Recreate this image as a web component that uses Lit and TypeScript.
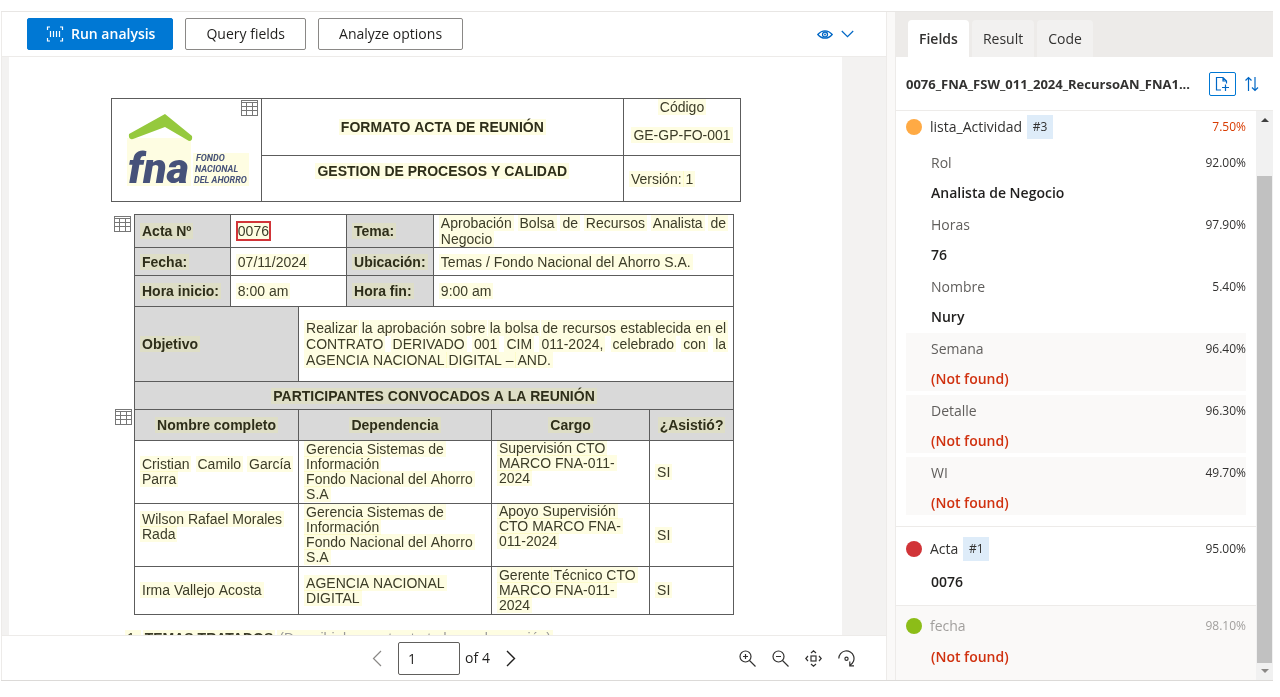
import { LitElement, html, css, svg } from "lit";
import { customElement, property, state } from "lit/decorators.js";
import { classMap } from "lit/directives/class-map.js";

const words = (text: string) =>
  text.split(" ").map((w, i) => html`${i ? " " : ""}<mark>${w}</mark>`);

const tableIcon = html`<svg width="17" height="16" viewBox="0 0 17 16" aria-hidden="true">
  <rect x="0.5" y="0.5" width="16" height="15" fill="#fff" stroke="#777" />
  <path d="M0 2.5H17M0 6.5H17M0 10.5H17M5.5 3V16M11.5 3V16" stroke="#777" fill="none" />
</svg>`;

@customElement("document-page")
class DocumentPage extends LitElement {
  static styles = css`
    :host {
      display: block;
      flex: 1;
      min-width: 0;
      background: #fff;
      padding: 41px 101px 0 102px;
      overflow: hidden;
      font: 14px/16px "Liberation Sans", Arial, sans-serif;
      color: #3c3c28;
    }
    .frame { position: relative; }
    .second { margin: 12px 7px 0 23px; }
    .marker { position: absolute; display: block; line-height: 0; }
    .on-logo { left: 130px; top: 2px; }
    .beside { left: -20px; top: 2px; }
    .beside-people { left: -19px; top: 195px; }
    table { width: 100%; border-collapse: collapse; table-layout: fixed; }
    th, td { border: 1px solid #5c5c5c; padding: 0 7px; text-align: left; font-weight: normal; }
    th { font-weight: bold; color: #2e2e1a; }
    mark { background: #fefde2; mix-blend-mode: multiply; color: inherit; padding: 0 2px; margin: 0 -2px; }
    .shade { background: #d9d9d9; }
    .shade mark { background: #dedec6; mix-blend-mode: normal; }
    .center { text-align: center; }
    .justify { text-align: justify; }
    .top { vertical-align: top; }
    .raised { padding-bottom: 16px; }
    .code { margin: 0 0 12px; }
    .people { line-height: 15px; }
    .boxed { outline: 2px solid #d13438; padding: 0; margin: 0; }
    .r28 { height: 28px; }
    .r31 { height: 31px; }
    .r33 { height: 33px; }
    .r46 { height: 46px; }
    .r48 { height: 48px; }
    .r57 { height: 57px; }
    .r63 { height: 63px; }
    .r75 { height: 75px; }
    .logo-cell { padding: 0; }
    .logo { display: block; margin: 0 auto 0 15px; }
    .logo-big { font: italic 900 43px Roboto, "Liberation Sans", sans-serif; fill: #46527a; }
    .logo-small { font: italic bold 9px Roboto, "Liberation Sans", sans-serif; fill: #46527a; }
    .topics { margin: 15px 0 0 16px; display: flex; gap: 6px; white-space: nowrap; }
    .topics-title { font-weight: bold; }
    .topics-note { color: #999; }
  `;

  render() {
    return html`
      <div class="frame">
        <table>
          <colgroup><col style="width:23.8%" /><col style="width:57.6%" /><col style="width:18.6%" /></colgroup>
          <tr class="r57">
            <td rowspan="2" class="logo-cell">
              <svg class="logo" width="124" height="76" viewBox="0 0 124 76" role="img" aria-label="FNA Fondo Nacional del Ahorro">
                <rect x="0" y="26" width="64" height="48" fill="#fefde2" />
                <rect x="66" y="41" width="56" height="33" fill="#fefde2" />
                <path d="M38 2 L65 24 Q66 29 62 29 L38 15 L6 27 Q1 28 2 22 Z" fill="#95c93d" />
                <text class="logo-big" x="1" y="71">fna</text>
                <text class="logo-small" x="69" y="49">FONDO</text>
                <text class="logo-small" x="68" y="60">NACIONAL</text>
                <text class="logo-small" x="67" y="71">DEL AHORRO</text>
              </svg>
            </td>
            <th class="center">${words("FORMATO ACTA DE REUNIÓN")}</th>
            <td class="center top"><p class="code">${words("Código")}</p>${words("GE-GP-FO-001")}</td>
          </tr>
          <tr class="r46">
            <th class="center raised">${words("GESTION DE PROCESOS Y CALIDAD")}</th>
            <td>${words("Versión: 1")}</td>
          </tr>
        </table>
        <span class="marker on-logo">${tableIcon}</span>
      </div>

      <div class="frame second">
        <table>
          <colgroup>
            <col style="width:16%" /><col style="width:11.4%" /><col style="width:8%" /><col style="width:14.5%" />
            <col style="width:9.7%" /><col style="width:26.4%" /><col style="width:14%" />
          </colgroup>
          <tr class="r33">
            <th class="shade">${words("Acta Nº")}</th>
            <td colspan="2"><mark class="boxed">0076</mark></td>
            <th class="shade">${words("Tema:")}</th>
            <td colspan="3" class="justify">${words("Aprobación Bolsa de Recursos Analista de Negocio")}</td>
          </tr>
          <tr class="r28">
            <th class="shade">${words("Fecha:")}</th>
            <td colspan="2">${words("07/11/2024")}</td>
            <th class="shade">${words("Ubicación:")}</th>
            <td colspan="3">${words("Temas / Fondo Nacional del Ahorro S.A.")}</td>
          </tr>
          <tr class="r31">
            <th class="shade">${words("Hora inicio:")}</th>
            <td colspan="2">${words("8:00 am")}</td>
            <th class="shade">${words("Hora fin:")}</th>
            <td colspan="3">${words("9:00 am")}</td>
          </tr>
          <tr class="r75">
            <th colspan="2" class="shade">${words("Objetivo")}</th>
            <td colspan="5" class="justify">
              ${words("Realizar la aprobación sobre la bolsa de recursos establecida en el CONTRATO DERIVADO 001 CIM 011-2024, celebrado con la AGENCIA NACIONAL DIGITAL – AND.")}
            </td>
          </tr>
          <tr class="r28">
            <th colspan="7" class="shade center">${words("PARTICIPANTES CONVOCADOS A LA REUNIÓN")}</th>
          </tr>
          <tr class="r31">
            <th colspan="2" class="shade center">${words("Nombre completo")}</th>
            <th colspan="3" class="shade center">${words("Dependencia")}</th>
            <th class="shade center">${words("Cargo")}</th>
            <th class="shade center">${words("¿Asistió?")}</th>
          </tr>
          <tr class="r63 people">
            <td colspan="2" class="justify">${words("Cristian Camilo García Parra")}</td>
            <td colspan="3">${words("Gerencia Sistemas de")}<br />${words("Información")}<br />${words("Fondo Nacional del Ahorro")}<br />${words("S.A")}</td>
            <td class="top">${words("Supervisión CTO")}<br />${words("MARCO FNA-011-")}<br />${words("2024")}</td>
            <td>${words("SI")}</td>
          </tr>
          <tr class="r63 people">
            <td colspan="2" class="raised">${words("Wilson Rafael Morales")}<br />${words("Rada")}</td>
            <td colspan="3">${words("Gerencia Sistemas de")}<br />${words("Información")}<br />${words("Fondo Nacional del Ahorro")}<br />${words("S.A")}</td>
            <td class="top">${words("Apoyo Supervisión")}<br />${words("CTO MARCO FNA-")}<br />${words("011-2024")}</td>
            <td>${words("SI")}</td>
          </tr>
          <tr class="r48 people">
            <td colspan="2">${words("Irma Vallejo Acosta")}</td>
            <td colspan="3">${words("AGENCIA NACIONAL")}<br />${words("DIGITAL")}</td>
            <td>${words("Gerente Técnico CTO")}<br />${words("MARCO FNA-011-")}<br />${words("2024")}</td>
            <td>${words("SI")}</td>
          </tr>
        </table>
        <span class="marker beside">${tableIcon}</span>
        <span class="marker beside-people">${tableIcon}</span>
      </div>
      <div class="topics">
        <span>${words("1.")}</span>
        <span class="topics-title">${words("TEMAS TRATADOS")}</span>
        <span class="topics-note">${words("(Describir los puntos tratados en la reunión)")}</span>
      </div>
    `;
  }
}

interface Entry { label: string; score: string; value?: string; }
interface Field extends Entry { color: string; tag?: string; low?: boolean; muted?: boolean; children?: Entry[]; }

const FIELDS: Field[] = [
  {
    label: "lista_Actividad", score: "7.50%", color: "#ffaa44", tag: "#3", low: true,
    children: [
      { label: "Rol", score: "92.00%", value: "Analista de Negocio" },
      { label: "Horas", score: "97.90%", value: "76" },
      { label: "Nombre", score: "5.40%", value: "Nury" },
      { label: "Semana", score: "96.40%" },
      { label: "Detalle", score: "96.30%" },
      { label: "WI", score: "49.70%" },
    ],
  },
  { label: "Acta", score: "95.00%", color: "#d13438", tag: "#1", value: "0076" },
  { label: "fecha", score: "98.10%", color: "#8cbd18", muted: true },
];

@customElement("field-item")
class FieldItem extends LitElement {
  @property({ attribute: false }) field!: Field;

  static styles = css`
    :host { display: block; }
    .item { padding: 10px 10px 13px; border-bottom: 1px solid #edebe9; }
    .parent { padding: 4px 10px 11px; }
    .missing { background: #faf9f8; border-bottom: 0; }
    .head { display: flex; align-items: center; gap: 8px; line-height: 20px; color: #323130; }
    .dot { width: 16px; height: 16px; border-radius: 50%; flex: none; background: var(--dot); }
    .name { margin-right: -3px; }
    .muted { color: #a19f9d; }
    .tag { background: #deecf9; width: 26px; height: 24px; line-height: 24px; text-align: center; font-size: 12px; }
    .score { margin-left: auto; font-size: 12px; }
    .low { color: #d83b01; }
    .value { margin: 11px 0 0 25px; line-height: 20px; font-weight: 600; color: #201f1e; }
    .value.none { color: #d0310f; }
    .children { display: grid; gap: 4px; margin-top: 8px; }
    .child { padding: 6px 0 2px 25px; }
    .child .head { color: #605e5c; }
    .child .score { color: #323130; }
    .child .value { margin: 10px 0 0; }
  `;

  private value(v?: string) {
    return html`<div class=${classMap({ value: true, none: !v })}>${v ?? "(Not found)"}</div>`;
  }

  render() {
    const f = this.field;
    return html`
      <div class=${classMap({ item: true, parent: !!f.children, missing: !f.children && !f.value })}>
        <div class=${classMap({ head: true, muted: !!f.muted })}>
          <span class="dot" style="--dot:${f.color}"></span>
          <span class="name">${f.label}</span>
          ${f.tag ? html`<span class="tag">${f.tag}</span>` : ""}
          <span class=${classMap({ score: true, low: !!f.low })}>${f.score}</span>
        </div>
        ${f.children
          ? html`<div class="children">
              ${f.children.map(c => html`
                <div class=${classMap({ child: true, missing: !c.value })}>
                  <div class="head"><span>${c.label}</span><span class="score">${c.score}</span></div>
                  ${this.value(c.value)}
                </div>`)}
            </div>`
          : this.value(f.value)}
      </div>
    `;
  }
}

const magnifier = (plus: boolean) => svg`
  <circle cx="6.5" cy="6.5" r="5.5" /><path d="M10.5 10.5 L16.5 16.5M4 6.5H9" />${plus ? svg`<path d="M6.5 4V9" />` : ""}`;

@customElement("app-root")
class AppRoot extends LitElement {
  @state() private tab = "Fields";

  static styles = css`
    :host {
      display: block;
      box-sizing: border-box;
      height: 100vh;
      padding: 11px 7px 16px 1px;
      background: #fff;
      font: 14px/20px "Open Sans", "Noto Sans", sans-serif;
      color: #201f1e;
    }
    * { box-sizing: border-box; }
    button { font: inherit; color: inherit; cursor: pointer; margin: 0; }
    svg { display: block; fill: none; stroke: currentColor; }
    .shell { display: flex; height: 100%; border-top: 1px solid #e8e6e4; border-bottom: 1px solid #dcdad8; }
    .viewer { flex: 1; min-width: 0; display: flex; flex-direction: column; border-left: 1px solid #edebe9; }
    .toolbar { display: flex; align-items: center; gap: 12px; height: 45px; padding: 0 32px 0 25px; border-bottom: 1px solid #edebe9; }
    .action { height: 32px; border: 1px solid #8a8886; border-radius: 2px; background: #fff; padding: 0 20px; white-space: nowrap; }
    .primary { background: #0078d4; border-color: #0078d4; color: #fff; font-weight: 600; display: flex; align-items: center; gap: 7px; padding: 0 17px 0 18px; }
    .view { margin-left: auto; display: flex; align-items: center; gap: 8px; border: 0; background: none; padding: 0; color: #0067c5; }
    .canvas { flex: 1; min-height: 0; display: flex; padding: 0 44px 0 7px; background: #f3f2f1; }
    .footer { display: grid; grid-template-columns: 1fr auto 1fr; align-items: center; height: 45px; border-top: 1px solid #edebe9; padding: 0 31px; }
    .pager { grid-column: 2; display: flex; align-items: center; }
    .icon { border: 0; background: none; padding: 0; }
    .prev { color: #8a8886; margin-right: 16px; }
    .next { margin-left: 16px; }
    .page-no { width: 62px; height: 33px; border: 1px solid #605e5c; border-radius: 2px; padding: 0 9px; font: inherit; color: inherit; margin: 0 5px 0 0; }
    .tools { display: flex; justify-content: flex-end; gap: 16px; color: #323130; }
    .splitter { width: 10px; background: #faf9f8; border: solid #edebe9; border-width: 0 1px; }
    .side { flex: 0 0 377px; min-width: 0; display: flex; flex-direction: column; }
    .tabs { display: flex; align-items: flex-end; gap: 3px; height: 45px; padding-left: 12px; background: #edebe9; }
    .tab { height: 37px; border: 0; border-radius: 4px 4px 0 0; background: #f2f1f0; color: #323130; padding: 0 11px; }
    .tab[aria-selected="true"] { background: #fff; font-weight: 600; }
    .title-row { display: flex; align-items: center; height: 54px; padding: 0 13px 0 10px; border-bottom: 1px solid #edebe9; }
    .title { flex: 1; min-width: 0; margin: 0; font-size: 13px; font-weight: 700; color: #323130; white-space: nowrap; }
    .add { width: 27px; height: 24px; border: 1px solid #0078d4; border-radius: 2px; background: #fff; color: #0067c5; display: grid; place-items: center; padding: 0; margin-right: 8px; }
    .sort { color: #0067c5; }
    .scroller { flex: 1; min-height: 0; display: flex; }
    .list { flex: 1; min-width: 0; overflow: hidden; display: flex; flex-direction: column; }
    .last { flex: 1; background: #faf9f8; }
    .bar { width: 17px; background: #f1f1f1; display: flex; flex-direction: column; align-items: center; padding: 7px 0; }
    .thumb { flex: 1; width: 15px; background: #c1c1c1; margin: 54px 0 6px; }
    .arrow { border: 4px solid transparent; border-top-width: 0; border-bottom-color: #404040; }
    .arrow.down { border-top: 4px solid #8a8886; border-bottom-width: 0; }
  `;

  render() {
    return html`
      <div class="shell">
        <main class="viewer">
          <div class="toolbar">
            <button class="action primary">
              <svg width="18" height="16" viewBox="0 0 18 16" stroke-width="1.2">
                <path d="M4 1H1.5V4M14 1H16.5V4M4 15H1.5V12M14 15H16.5V12M4.5 5V11M7.5 5V11M10.5 5V11M13.5 5V11" />
              </svg>
              Run analysis
            </button>
            <button class="action">Query fields</button>
            <button class="action">Analyze options</button>
            <button class="view" aria-label="View options">
              <svg width="16" height="9" viewBox="0 0 16 9" stroke-width="1.3">
                <path d="M0.8 4.5Q4 0.8 8 0.8T15.2 4.5Q12 8.2 8 8.2T0.8 4.5Z" /><circle cx="8" cy="4.5" r="2.5" /><circle cx="8" cy="4.5" r="0.4" />
              </svg>
              <svg width="13" height="8" viewBox="0 0 13 8" stroke-width="1.2"><path d="M0.8 1L6.5 6.7L12.2 1" /></svg>
            </button>
          </div>
          <div class="canvas"><document-page></document-page></div>
          <div class="footer">
            <div class="pager">
              <button class="icon prev" aria-label="Previous page"><svg width="10" height="17" viewBox="0 0 10 17" stroke-width="1.2"><path d="M9 1L1.5 8.5L9 16" /></svg></button>
              <input class="page-no" aria-label="Page number" .value=${"1"} />
              <span>of 4</span>
              <button class="icon next" aria-label="Next page"><svg width="10" height="17" viewBox="0 0 10 17" stroke-width="1.4"><path d="M1 1L8.5 8.5L1 16" /></svg></button>
            </div>
            <div class="tools">
              <button class="icon" aria-label="Zoom in"><svg width="17" height="17" viewBox="0 0 17 17" stroke-width="1.2">${magnifier(true)}</svg></button>
              <button class="icon" aria-label="Zoom out"><svg width="17" height="17" viewBox="0 0 17 17" stroke-width="1.2">${magnifier(false)}</svg></button>
              <button class="icon" aria-label="Fit to page">
                <svg width="17" height="17" viewBox="0 0 17 17" stroke-width="1.2">
                  <rect x="6" y="6" width="5" height="5" />
                  <path d="M6 3L8.5 0.8L11 3M6 14L8.5 16.2L11 14M3 6L0.8 8.5L3 11M14 6L16.2 8.5L14 11" />
                </svg>
              </button>
              <button class="icon" aria-label="Rotate">
                <svg width="17" height="17" viewBox="0 0 17 17" stroke-width="1.2">
                  <path d="M0.8 8.5A7.6 7.6 0 1 1 12 15.2M11.8 11.5V15.8H16" /><circle cx="8.5" cy="8.8" r="1.6" />
                </svg>
              </button>
            </div>
          </div>
        </main>
        <div class="splitter"></div>
        <aside class="side">
          <div class="tabs" role="tablist">
            ${["Fields", "Result", "Code"].map(t => html`
              <button class="tab" role="tab" aria-selected=${String(t === this.tab)} @click=${() => (this.tab = t)}>${t}</button>`)}
          </div>
          <div class="title-row">
            <h1 class="title">0076_FNA_FSW_011_2024_RecursoAN_FNA1...</h1>
            <button class="add" aria-label="Add document">
              <svg width="15" height="16" viewBox="0 0 15 16" stroke-width="1.2">
                <path d="M6 14H1.5V1.5H8L11.5 5V7.5M8 1.5V5H11.5M10.5 8.5V15M7 11.5H14" />
              </svg>
            </button>
            <button class="icon sort" aria-label="Sort">
              <svg width="16" height="16" viewBox="0 0 16 16" stroke-width="1.2">
                <path d="M4.5 15V1.5M1.5 4.5L4.5 1.5L7.5 4.5M11 1V14.5M8 11.5L11 14.5L14 11.5" />
              </svg>
            </button>
          </div>
          <div class="scroller">
            <div class="list">
              ${FIELDS.map((f, i) => html`<field-item class=${classMap({ last: i === FIELDS.length - 1 })} .field=${f}></field-item>`)}
            </div>
            <div class="bar" aria-hidden="true"><span class="arrow"></span><span class="thumb"></span><span class="arrow down"></span></div>
          </div>
        </aside>
      </div>
    `;
  }
}
